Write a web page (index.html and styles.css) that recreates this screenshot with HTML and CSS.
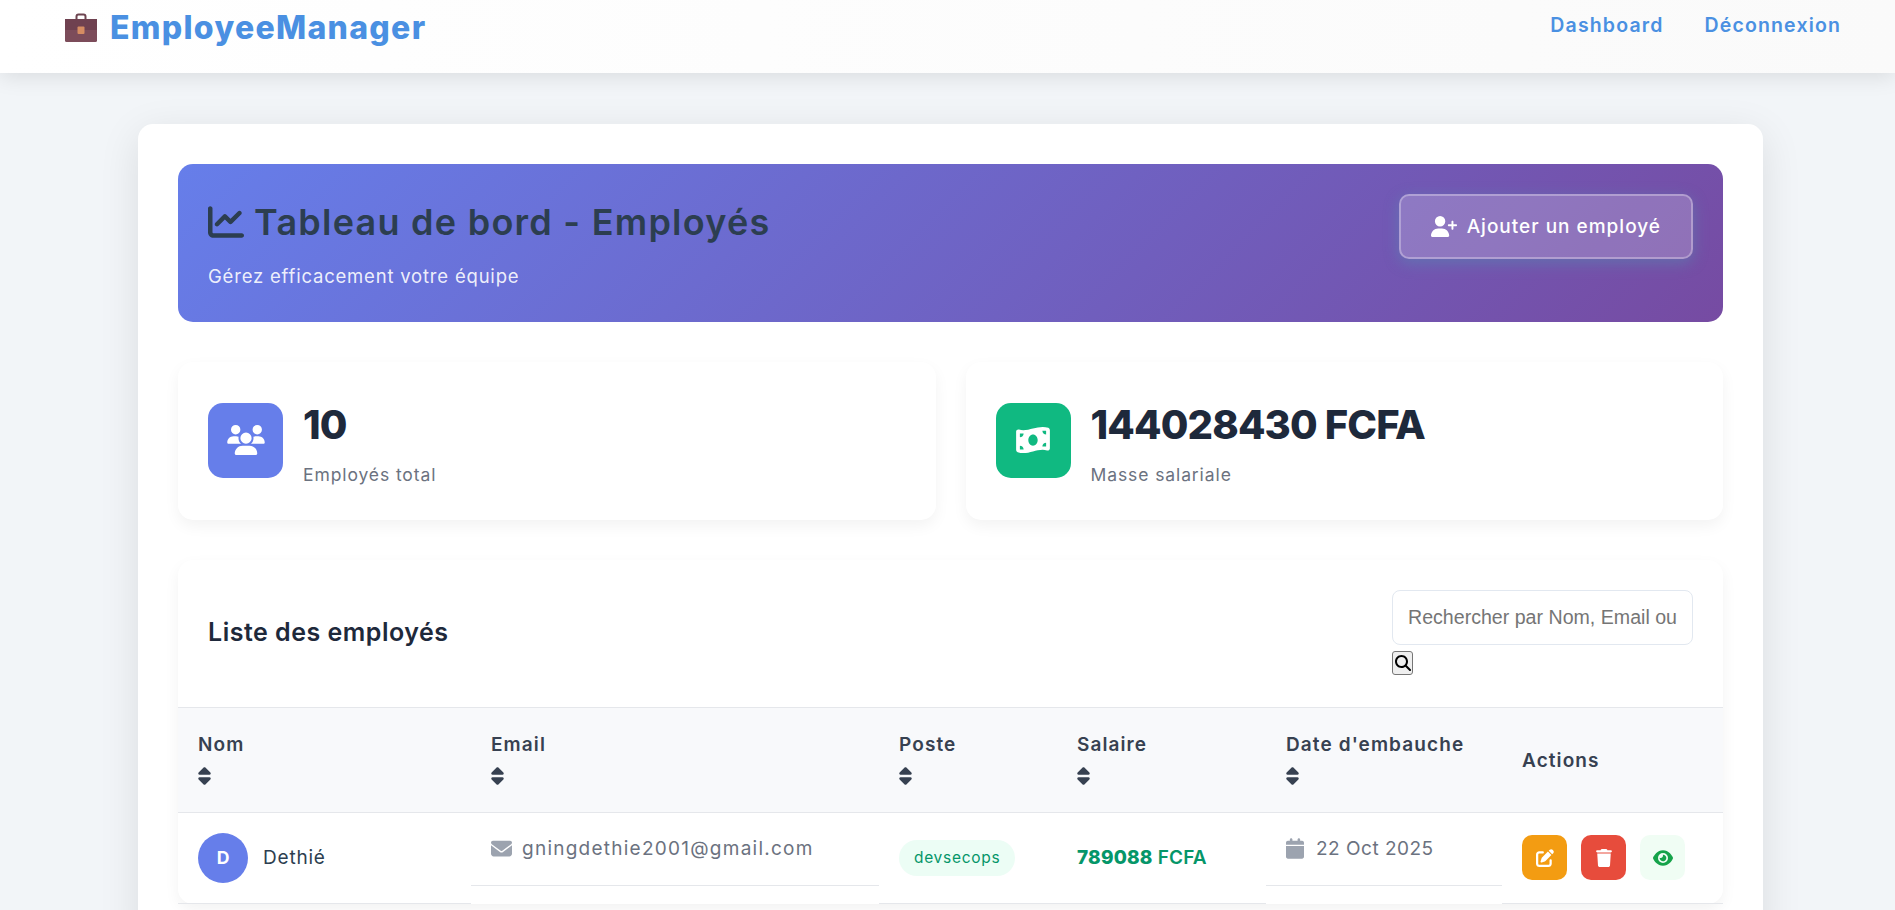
FILE: index.html
```html
<!DOCTYPE html>
<html lang="fr">
<head>
    <meta charset="UTF-8">
    <meta name="viewport" content="width=device-width, initial-scale=1.0">
    <title>EmployeeManager</title>
    <link rel="stylesheet" href="styles.css">
</head>
<body>
    <nav class="navbar">
        <a class="logo" href="#">
            <svg class="logo-icon" viewBox="0 0 32 30">
                <path d="M11.5 7V3.5a2 2 0 0 1 2-2h5a2 2 0 0 1 2 2V7" fill="none" stroke="#6d4450" stroke-width="2"/>
                <rect x="0" y="6" width="32" height="23" rx="1.5" fill="#7c4c5a"/>
                <rect x="0" y="6" width="32" height="11" fill="#6f4150"/>
                <rect x="12.5" y="13.5" width="7" height="7.5" rx="1" fill="#d58c62"/>
            </svg>
            <span>EmployeeManager</span>
        </a>
        <div class="nav-links">
            <a href="#">Dashboard</a>
            <a href="#">Déconnexion</a>
        </div>
    </nav>

    <main class="container">
        <section class="hero">
            <div>
                <h1>
                    <svg class="hero-icon" viewBox="0 0 512 512"><path d="M64 64c0-17.7-14.3-32-32-32S0 46.3 0 64V400c0 44.2 35.8 80 80 80H480c17.7 0 32-14.3 32-32s-14.3-32-32-32H80c-8.8 0-16-7.2-16-16V64zm406.6 86.6c12.5-12.5 12.5-32.8 0-45.3s-32.8-12.5-45.3 0L320 210.7l-57.4-57.4c-12.5-12.5-32.8-12.5-45.3 0l-112 112c-12.5 12.5-12.5 32.8 0 45.3s32.8 12.5 45.3 0L240 221.3l57.4 57.4c12.5 12.5 32.8 12.5 45.3 0l128-128z"/></svg>
                    Tableau de bord - Employés
                </h1>
                <p>Gérez efficacement votre équipe</p>
            </div>
            <a class="add-btn" href="#">
                <svg class="add-icon" viewBox="0 0 640 512"><path d="M96 128a128 128 0 1 1 256 0A128 128 0 1 1 96 128zM0 482.3C0 383.8 79.8 304 178.3 304h91.4C368.2 304 448 383.8 448 482.3c0 16.4-13.3 29.7-29.7 29.7H29.7C13.3 512 0 498.7 0 482.3zM504 312V248H440c-13.3 0-24-10.7-24-24s10.7-24 24-24h64V136c0-13.3 10.7-24 24-24s24 10.7 24 24v64h64c13.3 0 24 10.7 24 24s-10.7 24-24 24H552v64c0 13.3-10.7 24-24 24s-24-10.7-24-24z"/></svg>
                Ajouter un employé
            </a>
        </section>

        <section class="stats">
            <div class="stat-card">
                <div class="stat-icon stat-blue">
                    <svg viewBox="0 0 640 512"><path d="M144 0a80 80 0 1 1 0 160A80 80 0 1 1 144 0zM512 0a80 80 0 1 1 0 160A80 80 0 1 1 512 0zM0 298.7C0 239.8 47.8 192 106.7 192h42.7c15.9 0 31 3.5 44.6 9.7c-1.3 7.2-1.9 14.7-1.9 22.3c0 38.2 16.8 72.5 43.3 96c-.2 0-.4 0-.7 0H21.3C9.6 320 0 310.4 0 298.7zM405.3 320c-.2 0-.4 0-.7 0c26.6-23.5 43.3-57.8 43.3-96c0-7.6-.7-15-1.9-22.3c13.6-6.3 28.7-9.7 44.6-9.7h42.7C592.2 192 640 239.8 640 298.7c0 11.8-9.6 21.3-21.3 21.3H405.3zM224 224a96 96 0 1 1 192 0 96 96 0 1 1 -192 0zM128 485.3C128 411.7 187.7 352 261.3 352H378.7C452.3 352 512 411.7 512 485.3c0 14.7-11.9 26.7-26.7 26.7H154.7c-14.7 0-26.7-11.9-26.7-26.7z"/></svg>
                </div>
                <div>
                    <h3>10</h3>
                    <p>Employés total</p>
                </div>
            </div>
            <div class="stat-card">
                <div class="stat-icon stat-green">
                    <svg viewBox="0 0 576 512"><path d="M0 112.5V422.3c0 18 10.1 35 27 41.3c87 32.5 174 10.3 261-11.9c79.8-20.3 159.6-40.7 239.3-18.4c23 6.4 48.7-9.5 48.7-33.4V89.7c0-18-10.1-35-27-41.3C462 15.9 375 38.1 288 60.3C208.2 80.6 128.4 100.9 48.7 78.6C25.6 72.2 0 88.1 0 112.5zM288 352c-44.2 0-80-43-80-96s35.8-96 80-96s80 43 80 96s-35.8 96-80 96zM64 352c35.3 0 64 28.7 64 64H64V352zm64-208c0 35.3-28.7 64-64 64V144h64zM512 304v64H448c0-35.3 28.7-64 64-64zM448 96h64v64c-35.3 0-64-28.7-64-64z"/></svg>
                </div>
                <div>
                    <h3>144028430 FCFA</h3>
                    <p>Masse salariale</p>
                </div>
            </div>
        </section>

        <section class="table-card">
            <div class="table-header">
                <h2>Liste des employés</h2>
                <form class="search-form">
                    <input type="text" placeholder="Rechercher par Nom, Email ou Poste">
                    <button type="button" class="search-btn">
                        <svg viewBox="0 0 512 512"><path d="M416 208c0 45.9-14.9 88.3-40 122.7L502.6 457.4c12.5 12.5 12.5 32.8 0 45.3s-32.8 12.5-45.3 0L330.7 376c-34.4 25.2-76.8 40-122.7 40C93.1 416 0 322.9 0 208S93.1 0 208 0S416 93.1 416 208zM208 352a144 144 0 1 0 0-288 144 144 0 1 0 0 288z"/></svg>
                    </button>
                </form>
            </div>
            <table class="employees">
                <colgroup>
                    <col class="col-name">
                    <col class="col-email">
                    <col class="col-post">
                    <col class="col-salary">
                    <col class="col-date">
                    <col class="col-actions">
                </colgroup>
                <thead>
                    <tr>
                        <th>Nom <svg class="sort" viewBox="0 0 320 512"><path d="M137.4 41.4c12.5-12.5 32.8-12.5 45.3 0l128 128c9.2 9.2 11.9 22.9 6.9 34.9s-16.6 19.8-29.6 19.8H32c-12.9 0-24.6-7.8-29.6-19.8s-2.2-25.7 6.9-34.9l128-128zm0 429.3l-128-128c-9.2-9.2-11.9-22.9-6.9-34.9s16.6-19.8 29.6-19.8H288c12.9 0 24.6 7.8 29.6 19.8s2.2 25.7-6.9 34.9l-128 128c-12.5 12.5-32.8 12.5-45.3 0z"/></svg></th>
                        <th>Email <svg class="sort" viewBox="0 0 320 512"><path d="M137.4 41.4c12.5-12.5 32.8-12.5 45.3 0l128 128c9.2 9.2 11.9 22.9 6.9 34.9s-16.6 19.8-29.6 19.8H32c-12.9 0-24.6-7.8-29.6-19.8s-2.2-25.7 6.9-34.9l128-128zm0 429.3l-128-128c-9.2-9.2-11.9-22.9-6.9-34.9s16.6-19.8 29.6-19.8H288c12.9 0 24.6 7.8 29.6 19.8s2.2 25.7-6.9 34.9l-128 128c-12.5 12.5-32.8 12.5-45.3 0z"/></svg></th>
                        <th>Poste <svg class="sort" viewBox="0 0 320 512"><path d="M137.4 41.4c12.5-12.5 32.8-12.5 45.3 0l128 128c9.2 9.2 11.9 22.9 6.9 34.9s-16.6 19.8-29.6 19.8H32c-12.9 0-24.6-7.8-29.6-19.8s-2.2-25.7 6.9-34.9l128-128zm0 429.3l-128-128c-9.2-9.2-11.9-22.9-6.9-34.9s16.6-19.8 29.6-19.8H288c12.9 0 24.6 7.8 29.6 19.8s2.2 25.7-6.9 34.9l-128 128c-12.5 12.5-32.8 12.5-45.3 0z"/></svg></th>
                        <th>Salaire <svg class="sort" viewBox="0 0 320 512"><path d="M137.4 41.4c12.5-12.5 32.8-12.5 45.3 0l128 128c9.2 9.2 11.9 22.9 6.9 34.9s-16.6 19.8-29.6 19.8H32c-12.9 0-24.6-7.8-29.6-19.8s-2.2-25.7 6.9-34.9l128-128zm0 429.3l-128-128c-9.2-9.2-11.9-22.9-6.9-34.9s16.6-19.8 29.6-19.8H288c12.9 0 24.6 7.8 29.6 19.8s2.2 25.7-6.9 34.9l-128 128c-12.5 12.5-32.8 12.5-45.3 0z"/></svg></th>
                        <th>Date d'embauche <svg class="sort" viewBox="0 0 320 512"><path d="M137.4 41.4c12.5-12.5 32.8-12.5 45.3 0l128 128c9.2 9.2 11.9 22.9 6.9 34.9s-16.6 19.8-29.6 19.8H32c-12.9 0-24.6-7.8-29.6-19.8s-2.2-25.7 6.9-34.9l128-128zm0 429.3l-128-128c-9.2-9.2-11.9-22.9-6.9-34.9s16.6-19.8 29.6-19.8H288c12.9 0 24.6 7.8 29.6 19.8s2.2 25.7-6.9 34.9l-128 128c-12.5 12.5-32.8 12.5-45.3 0z"/></svg></th>
                        <th>Actions</th>
                    </tr>
                </thead>
                <tbody>
                    <tr>
                        <td>
                            <div class="person">
                                <div class="avatar">D</div>
                                <span class="person-name">Dethié</span>
                            </div>
                        </td>
                        <td class="muted-cell">
                            <svg class="cell-icon mail-icon" viewBox="0 0 512 512"><path d="M48 64C21.5 64 0 85.5 0 112c0 15.1 7.1 29.3 19.2 38.4L236.8 313.6c11.4 8.5 27 8.5 38.4 0L492.8 150.4c12.1-9.1 19.2-23.3 19.2-38.4c0-26.5-21.5-48-48-48H48zM0 176V384c0 35.3 28.7 64 64 64H448c35.3 0 64-28.7 64-64V176L294.4 339.2c-22.8 17.1-54 17.1-76.8 0L0 176z"/></svg>
                            <span class="email-text">gningdethie2001@gmail.com</span>
                        </td>
                        <td><span class="tag">devsecops</span></td>
                        <td class="salary"><strong>789088</strong> FCFA</td>
                        <td class="muted-cell">
                            <svg class="cell-icon date-icon" viewBox="0 0 448 512"><path d="M96 32V64H48C21.5 64 0 85.5 0 112v48H448V112c0-26.5-21.5-48-48-48H352V32c0-17.7-14.3-32-32-32s-32 14.3-32 32V64H160V32c0-17.7-14.3-32-32-32S96 14.3 96 32zM448 192H0V464c0 26.5 21.5 48 48 48H400c26.5 0 48-21.5 48-48V192z"/></svg>
                            <span class="date-text">22 Oct 2025</span>
                        </td>
                        <td>
                            <div class="actions">
                                <a class="action-btn action-edit" href="#"><svg viewBox="0 0 512 512"><path d="M471.6 21.7c-21.9-21.9-57.3-21.9-79.2 0L362.3 51.7l97.9 97.9 30.1-30.1c21.9-21.9 21.9-57.3 0-79.2L471.6 21.7zm-299.2 220c-6.1 6.1-10.8 13.6-13.5 21.9l-29.6 88.8c-2.9 8.6-.6 18.1 5.8 24.6s15.9 8.7 24.6 5.8l88.8-29.6c8.2-2.7 15.7-7.4 21.9-13.5L437.7 172.3 339.7 74.3 172.4 241.7zM96 64C43 64 0 107 0 160V416c0 53 43 96 96 96H352c53 0 96-43 96-96V320c0-17.7-14.3-32-32-32s-32 14.3-32 32v96c0 17.7-14.3 32-32 32H96c-17.7 0-32-14.3-32-32V160c0-17.7 14.3-32 32-32h96c17.7 0 32-14.3 32-32s-14.3-32-32-32H96z"/></svg></a>
                                <a class="action-btn action-delete" href="#"><svg viewBox="0 0 448 512"><path d="M135.2 17.7L128 32H32C14.3 32 0 46.3 0 64S14.3 96 32 96H416c17.7 0 32-14.3 32-32s-14.3-32-32-32H320l-7.2-14.3C307.4 6.8 296.3 0 284.2 0H163.8c-12.1 0-23.2 6.8-28.6 17.7zM416 128H32L53.2 467c1.6 25.3 22.6 45 47.9 45H346.9c25.3 0 46.3-19.7 47.9-45L416 128z"/></svg></a>
                                <a class="action-btn action-view" href="#"><svg viewBox="0 0 576 512"><path d="M288 32c-80.8 0-145.5 36.8-192.6 80.6C48.6 156 17.3 208 2.5 243.7c-3.3 7.9-3.3 16.7 0 24.6C17.3 304 48.6 356 95.4 399.4C142.5 443.2 207.2 480 288 480s145.5-36.8 192.6-80.6c46.8-43.5 78.1-95.4 93-131.1c3.3-7.9 3.3-16.7 0-24.6c-14.9-35.7-46.2-87.7-93-131.1C433.5 68.8 368.8 32 288 32zM144 256a144 144 0 1 1 288 0 144 144 0 1 1 -288 0zm144-64c0 35.3-28.7 64-64 64c-7.1 0-13.9-1.2-20.3-3.3c-5.5-1.8-11.9 1.6-11.7 7.4c.3 6.9 1.3 13.8 3.2 20.7c13.7 51.2 66.4 81.6 117.6 67.9s81.6-66.4 67.9-117.6c-11.1-41.5-47.8-69.4-88.6-71.1c-5.8-.2-9.2 6.1-7.4 11.7c2.1 6.4 3.3 13.2 3.3 20.3z"/></svg></a>
                            </div>
                        </td>
                    </tr>
                </tbody>
            </table>
        </section>
    </main>
</body>
</html>
```

FILE: styles.css
```css
:root {
    --primary: #667eea;
    --link: #4a90e2;
    --ink: #1e293b;
    --slate: #2c3e50;
    --muted: #6b7280;
    --line: #e5e7eb;
}

* {
    box-sizing: border-box;
}

html {
    height: 100%;
    overflow: hidden;
}

body {
    margin: 0;
    height: 100%;
    overflow: hidden;
    background: #f2f5f8;
    font-family: Inter, "Noto Sans", sans-serif;
    color: var(--slate);
}

a {
    text-decoration: none;
}

.navbar {
    display: flex;
    justify-content: space-between;
    align-items: flex-start;
    height: 73px;
    padding: 9px 54px 0 65px;
    background: linear-gradient(90deg, #ffffff, #fafafa);
    box-shadow: 0 4px 20px rgba(0, 0, 0, 0.1);
}

.logo {
    display: flex;
    align-items: center;
    gap: 13px;
    margin-top: 1px;
    font-size: 32px;
    line-height: 36px;
    font-weight: 800;
    letter-spacing: 1.3px;
    color: var(--link);
}

.logo-icon {
    width: 32px;
    height: 30px;
}

.nav-links {
    display: flex;
    gap: 41px;
}

.nav-links a {
    font-size: 19.5px;
    line-height: 32px;
    font-weight: 600;
    letter-spacing: 1.15px;
    color: var(--link);
}

.container {
    margin: 51px 132px 0 138px;
    padding: 40px;
    background: #fff;
    border-radius: 15px;
    box-shadow: 0 10px 40px rgba(0, 0, 0, 0.1);
}

.hero {
    display: flex;
    justify-content: space-between;
    align-items: flex-start;
    height: 158px;
    padding: 30px;
    border-radius: 15px;
    background: linear-gradient(135deg, #667eea, #764ba2);
}

.hero h1 {
    display: flex;
    align-items: center;
    gap: 10px;
    margin: 0;
    font-size: 36px;
    line-height: 56px;
    font-weight: 600;
    letter-spacing: 1.25px;
    color: var(--slate);
}

.hero-icon {
    width: 36px;
    height: 36px;
    fill: var(--slate);
}

.hero p {
    margin: 12px 0 0;
    font-size: 18.5px;
    line-height: 28px;
    letter-spacing: 0.8px;
    color: rgba(255, 255, 255, 0.9);
}

.add-btn {
    display: flex;
    align-items: center;
    gap: 10px;
    height: 65px;
    padding: 0 30px;
    border: 2px solid rgba(255, 255, 255, 0.3);
    border-radius: 10px;
    background: rgba(255, 255, 255, 0.2);
    box-shadow: 0 4px 15px rgba(80, 150, 180, 0.45);
    font-size: 19px;
    font-weight: 500;
    letter-spacing: 1px;
    color: #fff;
}

.add-icon {
    width: 26px;
    height: 21px;
    fill: #fff;
}

.stats {
    display: grid;
    grid-template-columns: 1fr 1fr;
    gap: 30px;
    margin-top: 40px;
}

.stat-card {
    display: flex;
    align-items: center;
    gap: 20px;
    height: 158px;
    padding: 29px 30px 31px;
    background: #fff;
    border-radius: 15px;
    box-shadow: 0 6px 15px rgba(0, 0, 0, 0.05);
}

.stat-icon {
    display: flex;
    justify-content: center;
    align-items: center;
    width: 75px;
    height: 75px;
    border-radius: 15px;
}

.stat-icon svg {
    width: 38px;
    height: 30px;
    fill: #fff;
}

.stat-blue {
    background: var(--primary);
}

.stat-green {
    background: #10b981;
}

.stat-card h3 {
    margin: 2px 0 0;
    font-size: 40px;
    line-height: 64px;
    font-weight: 800;
    letter-spacing: -0.85px;
    color: var(--ink);
}

.stat-card p {
    margin: 4px 0 0;
    font-size: 17.5px;
    line-height: 28px;
    letter-spacing: 0.9px;
    color: var(--muted);
}

.table-card {
    margin-top: 40px;
    background: #fff;
    border-radius: 15px;
    box-shadow: 0 6px 15px rgba(0, 0, 0, 0.05);
}

.table-header {
    display: flex;
    justify-content: space-between;
    align-items: center;
    height: 148px;
    padding: 0 30px;
    border-bottom: 1px solid var(--line);
}

.table-header h2 {
    margin: 0 0 4px;
    font-size: 25px;
    font-weight: 600;
    letter-spacing: 0.5px;
    color: var(--ink);
}

.search-form {
    align-self: flex-start;
    width: 301px;
    margin-top: 30px;
}

.search-form input {
    display: block;
    width: 100%;
    height: 55px;
    padding: 0 15px;
    border: 1px solid #e2e8f0;
    border-radius: 8px;
    font-family: "Liberation Sans", Arial, sans-serif;
    font-size: 19.6px;
}

.search-btn {
    display: flex;
    justify-content: center;
    align-items: center;
    width: 21px;
    height: 24px;
    margin-top: 6px;
    padding: 0;
    border: 1px solid #767676;
    border-radius: 3px;
    background: #efefef;
}

.search-btn svg {
    width: 16px;
    height: 16px;
}

.employees {
    width: 100%;
    table-layout: fixed;
    border-collapse: collapse;
}

.col-name { width: 293px; }
.col-email { width: 408px; }
.col-post { width: 178px; }
.col-salary { width: 209px; }
.col-date { width: 236px; }
.col-actions { width: 221px; }

.employees th {
    height: 104px;
    padding: 0 20px 4px;
    background: #f8f9fb;
    border-bottom: 1px solid var(--line);
    text-align: left;
    font-size: 19px;
    line-height: 32px;
    font-weight: 600;
    letter-spacing: 1.1px;
    color: #374151;
}

.employees th:last-child {
    padding: 2px 20px 0;
}

.sort {
    display: block;
    width: 13px;
    height: 20px;
    margin-top: 5px;
    fill: #374151;
}

.employees td {
    height: 91px;
    padding: 20px;
    border-bottom: 1px solid var(--line);
    font-size: 19px;
}

.employees td.muted-cell {
    display: flex;
    align-items: center;
    gap: 10px;
    height: 73px;
    color: var(--muted);
}

.person {
    display: flex;
    align-items: center;
    gap: 15px;
}

.person-name {
    letter-spacing: 0.8px;
}

.avatar {
    display: flex;
    justify-content: center;
    align-items: center;
    width: 50px;
    height: 50px;
    border-radius: 50%;
    background: var(--primary);
    font-size: 17.6px;
    font-weight: 700;
    color: #fff;
}

.cell-icon {
    flex: none;
    fill: #9ca3af;
}

.mail-icon {
    width: 21px;
    height: 21px;
}

.date-icon {
    width: 18px;
    height: 21px;
}

.email-text {
    letter-spacing: 1.25px;
}

.date-text {
    margin-left: 2px;
    letter-spacing: 0.5px;
}

.tag {
    display: inline-block;
    padding: 0 15px;
    border-radius: 20px;
    background: #ecfdf5;
    font-size: 15.5px;
    line-height: 36px;
    letter-spacing: 0.7px;
    color: #059669;
}

.salary {
    font-weight: 600;
    letter-spacing: 0.2px;
    color: #059669;
}

.salary strong {
    font-weight: 800;
}

.actions {
    display: flex;
    gap: 14px;
}

.action-btn {
    display: flex;
    justify-content: center;
    align-items: center;
    width: 45px;
    height: 45px;
    border-radius: 10px;
}

.action-btn svg {
    height: 18px;
    width: 20px;
}

.action-edit {
    background: #f39c12;
    fill: #fff;
}

.action-delete {
    background: #e74c3c;
    fill: #fff;
}

.action-view {
    background: #f0fdf4;
    fill: #16a34a;
}
```
